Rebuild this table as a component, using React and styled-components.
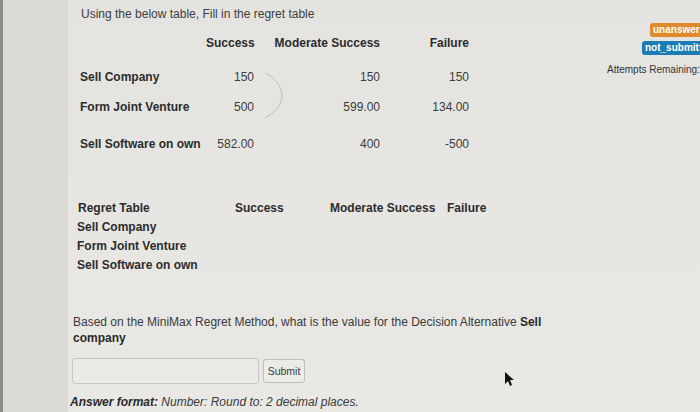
import React from "react"
import styled, { createGlobalStyle } from "styled-components"

const GlobalStyle = createGlobalStyle`
  html, body {
    margin: 0;
    padding: 0;
    overflow: hidden;
    background: #e5e4e1;
  }
  body {
    font-family: "Liberation Sans", Arial, sans-serif;
    color: #3a3a3a;
  }
`

const Page = styled.div`
  position: relative;
  display: grid;
  grid-template-columns: 68px 1fr;
  width: 700px;
  height: 412px;
  overflow: hidden;
`

const Strip = styled.div`
  border-left: 3px solid #8a8a88;
  background: #dbdad7;
`

const Body = styled.div`
  display: grid;
  grid-template-columns: 532px 1fr;
  background: linear-gradient(180deg, #e4e3e0 0%, #e7e6e3 60%, #e9e8e5 100%);
`

const Content = styled.div`
  display: flex;
  flex-direction: column;
  padding-top: 6px;
`

const Title = styled.div`
  margin-left: 13px;
  font-size: 12px;
  line-height: 16px;
  color: #3d3d3d;
`

const Row = styled.div`
  display: grid;
  grid-template-columns: ${p => p.$cols};
  align-items: center;
  height: ${p => p.$h || 20}px;
  margin-top: ${p => p.$top || 0}px;
  margin-left: ${p => p.$indent}px;
  font-size: 12px;
`

const Label = styled.span`
  font-weight: bold;
  color: #2c2c2c;
  white-space: nowrap;
`

const Num = styled.span`
  text-align: right;
  color: #3b3b3b;
  white-space: nowrap;
`

const Head = styled.span`
  font-weight: bold;
  color: #2c2c2c;
  text-align: ${p => (p.$left ? "left" : "right")};
  white-space: nowrap;
`

const Question = styled.p`
  margin: 40px 0 0 5px;
  width: 480px;
  font-size: 12px;
  line-height: 16px;
  color: #3a3a3a;

  b {
    color: #2a2a2a;
  }
`

const AnswerRow = styled.div`
  display: flex;
  gap: 4px;
  align-items: center;
  margin: 12px 0 0 4px;
`

const Input = styled.div`
  width: 185px;
  height: 24px;
  border: 1px solid #c9c8c5;
  border-radius: 3px;
  background: #ebeae7;
`

const Button = styled.div`
  display: flex;
  align-items: center;
  justify-content: center;
  width: 40px;
  height: 22px;
  border: 1px solid #bebdba;
  border-radius: 3px;
  background: #ecebe8;
  font-size: 10.5px;
  color: #3a3a3a;
`

const Format = styled.div`
  margin: 10px 0 0 2px;
  font-size: 12px;
  line-height: 16px;
  font-style: italic;
  color: #3a3a3a;
  white-space: nowrap;

  b {
    color: #2a2a2a;
  }
`

const Side = styled.div`
  display: flex;
  flex-direction: column;
  align-items: flex-start;
  padding-top: 23px;
`

const Badge = styled.span`
  margin-left: ${p => p.$indent}px;
  margin-bottom: 4px;
  padding: 0 4px 0 3px;
  height: 14px;
  line-height: 14px;
  border-radius: 3px;
  background: ${p => p.$bg};
  color: #fff;
  font-size: 10px;
  font-weight: bold;
  white-space: nowrap;
`

const Attempts = styled.span`
  margin: 5px 0 0 7px;
  font-size: 10px;
  color: #333;
  white-space: nowrap;
`

const Overlay = styled.svg`
  position: absolute;
  left: 0;
  top: 0;
  pointer-events: none;
`

const payoffCols = "126px 48px 126px 89px"
const regretCols = "157px 95px 117px auto"

const payoffs = [
  { name: "Sell Company", v: ["150", "150", "150"], top: 14 },
  { name: "Form Joint Venture", v: ["500", "599.00", "134.00"], top: 10 },
  { name: "Sell Software on own", v: ["582.00", "400", "-500"], top: 17 },
]

const regretRows = ["Sell Company", "Form Joint Venture", "Sell Software on own"]

const App = () => (
  <Page>
    <GlobalStyle />
    <Strip />
    <Body>
      <Content>
        <Title>Using the below table, Fill in the regret table</Title>

        <Row $cols={payoffCols} $indent={12} $top={11}>
          <span />
          <Head>Success</Head>
          <Head>Moderate Success</Head>
          <Head>Failure</Head>
        </Row>
        {payoffs.map(r => (
          <Row key={r.name} $cols={payoffCols} $indent={12} $top={r.top}>
            <Label>{r.name}</Label>
            {r.v.map((n, i) => (
              <Num key={i}>{n}</Num>
            ))}
          </Row>
        ))}

        <Row $cols={regretCols} $indent={10} $top={44} $h={19}>
          <Head $left>Regret Table</Head>
          <Head $left>Success</Head>
          <Head $left>Moderate Success</Head>
          <Head $left>Failure</Head>
        </Row>
        {regretRows.map(name => (
          <Row key={name} $cols={regretCols} $indent={9} $h={19}>
            <Label>{name}</Label>
          </Row>
        ))}

        <Question>
          Based on the MiniMax Regret Method, what is the value for the Decision Alternative <b>Sell</b>{" "}
          <b>company</b>
        </Question>

        <AnswerRow>
          <Input />
          <Button>Submit</Button>
        </AnswerRow>

        <Format>
          <b>Answer format:</b> Number: Round to: 2 decimal places.
        </Format>
      </Content>

      <Side>
        <Badge $indent={50} $bg="#df8a2c">unanswered</Badge>
        <Badge $indent={42} $bg="#1b7cb3">not_submitted</Badge>
        <Attempts>Attempts Remaining:</Attempts>
      </Side>
    </Body>

    <Overlay width="700" height="412" viewBox="0 0 700 412">
      <path d="M265 73 C 284 82, 291 104, 265 118" fill="none" stroke="#b9b8b5" strokeWidth="0.9" />
      <path
        d="M505 372 L505 384 L508 381 L510 386 L512 385 L510 380 L514 380 Z"
        fill="#111"
      />
    </Overlay>
  </Page>
)

export default App
